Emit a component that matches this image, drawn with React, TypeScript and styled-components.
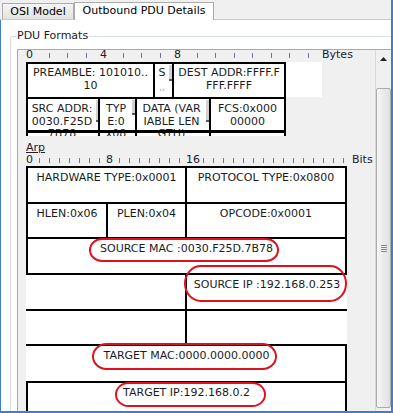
import React from "react";
import styled, { createGlobalStyle } from "styled-components";

const FONT = `"DejaVu Sans", Verdana, "Liberation Sans", sans-serif`;
const BLUE = "#3f7fc6";
const INK = "#1b1b1f";

const GlobalStyle = createGlobalStyle`
  html, body { margin: 0; padding: 0; background: #ffffff; }
  #root { width: 393px; height: 413px; }
`;

const Window = styled.div`
  width: 393px;
  height: 413px;
  box-sizing: border-box;
  border-right: 2px solid ${BLUE};
  border-bottom: 2px solid ${BLUE};
  background: #f0f0f0;
  display: flex;
  flex-direction: column;
  overflow: hidden;
  font-family: ${FONT};
  font-size: 11px;
  color: ${INK};
`;

const TabStrip = styled.div`
  flex: none;
  height: 20px;
  box-sizing: border-box;
  display: flex;
  align-items: flex-end;
  padding-left: 2px;
  border-bottom: 1px solid #c3cbd3;
`;

const Tab = styled.div<{ $active?: boolean; $w: number }>`
  flex: 0 0 ${(p) => p.$w}px;
  box-sizing: border-box;
  height: ${(p) => (p.$active ? 18 : 16)}px;
  margin-bottom: ${(p) => (p.$active ? -1 : 0)}px;
  border: 1px solid #acacac;
  border-bottom: none;
  background: ${(p) => (p.$active ? "#ffffff" : "linear-gradient(#f5f5f5, #e2e2e2)")};
  text-align: center;
  line-height: 14px;
  padding-top: 1px;
  color: #000;
  white-space: nowrap;
`;

const Panel = styled.div`
  flex: 1;
  min-height: 0;
  display: flex;
  flex-direction: column;
  background: #ffffff;
  border-left: 1px solid ${BLUE};
  padding: 9px 0 0 9px;
`;

const Group = styled.fieldset`
  flex: 1;
  min-height: 0;
  min-width: 0;
  margin: 0;
  padding: 6px 0 0 6px;
  border: 1px solid #d5dde5;
  border-right: none;
  border-bottom: none;
  border-top-left-radius: 3px;
  display: flex;
  flex-direction: column;
`;

const GroupTitle = styled.legend`
  padding: 0 1px;
  margin-left: -1px;
  line-height: 14px;
  font-size: 11px;
  color: ${INK};
`;

const Pane = styled.div`
  flex: 1;
  min-height: 0;
  display: flex;
  border-top: 1px solid #a9a9a9;
  border-left: 1px solid #a9a9a9;
  background: #f0f0f0;
`;

const Viewport = styled.div`
  flex: 1;
  min-width: 0;
  overflow: hidden;
  padding-left: 8px;
  display: flex;
  flex-direction: column;
`;

const Scrollbar = styled.div`
  flex: 0 0 16px;
  box-sizing: border-box;
  border-left: 1px solid #dadada;
  background: #f0f0f0;
  display: flex;
  flex-direction: column;
  align-items: center;
`;

const ArrowButton = styled.div`
  flex: 0 0 38px;
  width: 100%;
  display: flex;
  justify-content: center;
  padding-top: 7px;
  box-sizing: border-box;
`;

const Thumb = styled.div`
  flex: 0 0 320px;
  width: 15px;
  box-sizing: border-box;
  border: 1px solid #ababab;
  border-radius: 2px;
  background: linear-gradient(to right, #f6f6f6, #e0e0e0);
  display: flex;
  flex-direction: column;
  align-items: center;
  justify-content: center;
  gap: 1px;
`;

const Grip = styled.span`
  display: block;
  width: 6px;
  height: 1px;
  background: #8a8a8a;
`;

/* rulers */
const RulerBar = styled.div<{ $mt: number }>`
  flex: none;
  display: flex;
  height: 12px;
  line-height: 12px;
  margin-top: ${(p) => p.$mt}px;
  white-space: nowrap;
  color: #20202c;
`;

const RulerUnit = styled.div<{ $w: number }>`
  flex: 0 0 ${(p) => p.$w}px;
  overflow: visible;
`;

const Tick = styled.span<{ $ml: number; $mt: number }>`
  display: block;
  width: 1px;
  height: 5px;
  margin-left: ${(p) => p.$ml}px;
  margin-top: ${(p) => p.$mt}px;
  background: #7a6ca6;
`;

const RulerTail = styled.span<{ $ml: number }>`
  margin-left: ${(p) => p.$ml}px;
`;

/* ethernet frame */
const FrameRow = styled.div<{ $h: number; $mt?: number }>`
  flex: none;
  display: flex;
  height: ${(p) => p.$h}px;
  margin-top: ${(p) => p.$mt ?? 0}px;
`;

const Field = styled.div<{ $w: number; $right?: boolean; $tall?: boolean }>`
  flex: 0 0 ${(p) => p.$w}px;
  box-sizing: border-box;
  position: relative;
  height: 100%;
  border-top: 2px solid #000;
  border-left: 2px solid #000;
  border-right: ${(p) => (p.$right ? "2px solid #000" : "none")};
  background: #ffffff;
  display: flex;
  overflow: hidden;
  ${(p) =>
    p.$tall
      ? `&::after { content: ""; position: absolute; left: 0; right: 0; top: 31px; height: 3px; background: #000; }`
      : ""}
`;

const FieldText = styled.div<{ $pt: number }>`
  flex: 1;
  min-width: 0;
  display: flex;
  flex-direction: column;
  align-items: center;
  padding-top: ${(p) => p.$pt}px;
  line-height: 12.5px;
  white-space: pre;
  text-align: center;
`;

const Stub = styled.span<{ $h: number; $w: number }>`
  flex: 0 0 ${(p) => p.$w}px;
  height: ${(p) => p.$h}px;
  margin-top: 1px;
  background: #d2d2d2;
  border-bottom: 2px solid #5a5a5a;
`;

const MiniArrows = styled.span`
  font-size: 7px;
  line-height: 8px;
  margin-top: 6px;
  color: #8d93a6;
`;

const Filler = styled.div<{ $w: number }>`
  flex: 0 0 ${(p) => p.$w}px;
  background: #ffffff;
`;

const ProtoName = styled.div`
  flex: none;
  height: 13px;
  line-height: 13px;
  margin-top: 5px;
  text-decoration: underline;
  color: #20202c;
`;

/* ARP table */
const ArpTable = styled.div`
  flex: none;
  position: relative;
  width: 321px;
  display: flex;
  flex-direction: column;
`;

const TRow = styled.div<{ $h: number }>`
  flex: none;
  display: flex;
  height: ${(p) => p.$h}px;
`;

const TCell = styled.div<{ $w: number; $noLeft?: boolean; $right?: boolean }>`
  flex: 0 0 ${(p) => p.$w}px;
  box-sizing: border-box;
  border-top: 2px solid #000;
  border-left: ${(p) => (p.$noLeft ? "none" : "2px solid #000")};
  padding-left: ${(p) => (p.$noLeft ? 2 : 0)}px;
  border-right: ${(p) => (p.$right ? "2px solid #000" : "none")};
  background: #ffffff;
  text-align: center;
  padding-top: 3px;
  line-height: 13px;
  white-space: nowrap;
  overflow: hidden;
`;

const Mark = styled.svg<{ $x: number; $y: number }>`
  position: absolute;
  left: ${(p) => p.$x}px;
  top: ${(p) => p.$y}px;
  overflow: visible;
  pointer-events: none;
`;

function Ruler({
  unit,
  count,
  labels,
  tail,
  tickOffset,
  mt,
  tailGap,
}: {
  unit: number;
  count: number;
  labels: Record<number, string>;
  tail: string;
  tickOffset: number;
  mt: number;
  tailGap: number;
}) {
  const items = [];
  for (let i = 0; i < count; i++) {
    items.push(
      <RulerUnit key={i} $w={unit}>
        {labels[i] !== undefined ? labels[i] : <Tick $ml={tickOffset} $mt={4} />}
      </RulerUnit>
    );
  }
  return (
    <RulerBar $mt={mt}>
      {items}
      <RulerTail $ml={tailGap}>{tail}</RulerTail>
    </RulerBar>
  );
}

function Ellipse({ x, y, w, h }: { x: number; y: number; w: number; h: number }) {
  return (
    <Mark $x={x} $y={y} width={w} height={h} viewBox={`0 0 ${w} ${h}`}>
      <rect
        x={1}
        y={1}
        width={w - 2}
        height={h - 2}
        rx={Math.min(16, h / 2)}
        ry={(h - 2) / 2}
        fill="none"
        stroke="#e2101c"
        strokeWidth={2}
      />
    </Mark>
  );
}

function ScrollArrow() {
  return (
    <svg width="7" height="4" viewBox="0 0 7 4">
      <path d="M0 4 L3.5 0 L7 4 Z" fill="#222" />
    </svg>
  );
}

export default function App() {
  return (
    <>
      <GlobalStyle />
      <Window>
        <TabStrip>
          <Tab $w={72}>OSI Model</Tab>
          <Tab $w={140} $active>
            Outbound PDU Details
          </Tab>
        </TabStrip>
        <Panel>
          <Group>
            <GroupTitle>PDU Formats</GroupTitle>
            <Pane>
              <Viewport>
                <Ruler
                  unit={18.5}
                  count={16}
                  labels={{ 0: "0", 4: "4", 8: "8" }}
                  tail="Bytes"
                  tickOffset={4}
                  mt={-1}
                  tailGap={0}
                />
                <FrameRow $h={35} $mt={1}>
                  <Field $w={127}>
                    <FieldText $pt={3}>{"PREAMBLE: 101010..\n10"}</FieldText>
                  </Field>
                  <Field $w={19}>
                    <FieldText $pt={3}>
                      S<MiniArrows>‹›</MiniArrows>
                    </FieldText>
                    <Stub $h={14} $w={3} />
                  </Field>
                  <Field $w={114} $right>
                    <FieldText $pt={3}>{"DEST ADDR:FFFF.F\nFFF.FFFF"}</FieldText>
                  </Field>
                  <Filler $w={36} />
                </FrameRow>
                <FrameRow $h={39}>
                  <Field $w={72} $tall>
                    <FieldText $pt={4}>{"SRC ADDR:\n0030.F25D\n7B78"}</FieldText>
                    <Stub $h={20} $w={2} />
                  </Field>
                  <Field $w={37} $tall>
                    <FieldText $pt={4}>{"TYP\nE:0\nx08"}</FieldText>
                    <Stub $h={13} $w={3} />
                  </Field>
                  <Field $w={74} $tall>
                    <FieldText $pt={4}>{"DATA (VAR\nIABLE LEN\nGTH)"}</FieldText>
                    <Stub $h={20} $w={3} />
                  </Field>
                  <Field $w={77} $right $tall>
                    <FieldText $pt={4}>{"FCS:0x000\n00000"}</FieldText>
                  </Field>
                </FrameRow>
                <ProtoName>Arp</ProtoName>
                <Ruler
                  unit={10}
                  count={32}
                  labels={{ 0: "0", 8: "8", 16: "16" }}
                  tail="Bits"
                  tickOffset={3}
                  mt={0}
                  tailGap={2}
                />
                <ArpTable>
                  <TRow $h={36}>
                    <TCell $w={159}>HARDWARE TYPE:0x0001</TCell>
                    <TCell $w={162} $right>
                      PROTOCOL TYPE:0x0800
                    </TCell>
                  </TRow>
                  <TRow $h={35}>
                    <TCell $w={80}>HLEN:0x06</TCell>
                    <TCell $w={79}>PLEN:0x04</TCell>
                    <TCell $w={162} $right>
                      OPCODE:0x0001
                    </TCell>
                  </TRow>
                  <TRow $h={36}>
                    <TCell $w={321} $right>
                      SOURCE MAC :0030.F25D.7B78
                    </TCell>
                  </TRow>
                  <TRow $h={36}>
                    <TCell $w={159} $noLeft />
                    <TCell $w={162}>SOURCE IP :192.168.0.253</TCell>
                  </TRow>
                  <TRow $h={35}>
                    <TCell $w={159} $noLeft />
                    <TCell $w={162} />
                  </TRow>
                  <TRow $h={37}>
                    <TCell $w={321} $noLeft $right>
                      TARGET MAC:0000.0000.0000
                    </TCell>
                  </TRow>
                  <TRow $h={36}>
                    <TCell $w={321} $right>
                      TARGET IP:192.168.0.2
                    </TCell>
                  </TRow>
                  <Ellipse x={63} y={72} w={190} h={24} />
                  <Ellipse x={158} y={99} w={163} h={37} />
                  <Ellipse x={66} y={177} w={185} h={27} />
                  <Ellipse x={89} y={216} w={151} h={25} />
                </ArpTable>
              </Viewport>
              <Scrollbar>
                <ArrowButton>
                  <ScrollArrow />
                </ArrowButton>
                <Thumb>
                  <Grip />
                  <Grip />
                  <Grip />
                  <Grip />
                </Thumb>
              </Scrollbar>
            </Pane>
          </Group>
        </Panel>
      </Window>
    </>
  );
}
